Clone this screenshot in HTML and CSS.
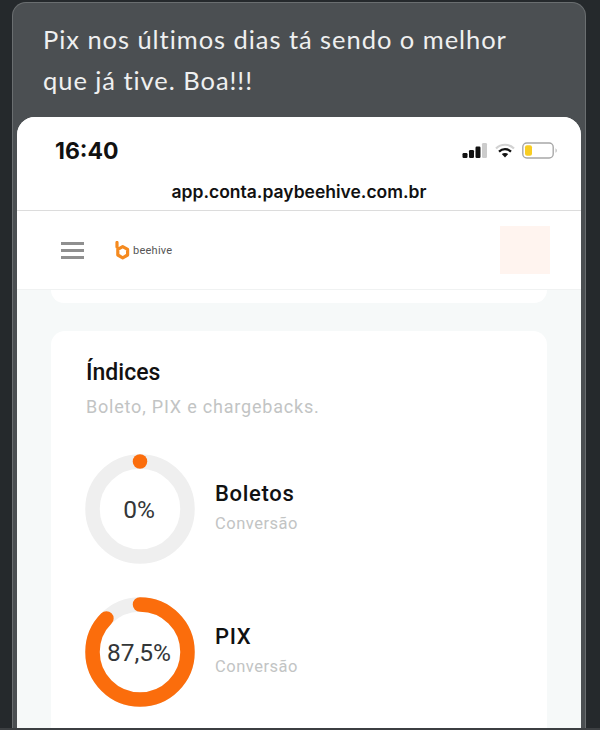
FILE: index.html
```html
<!DOCTYPE html>
<html lang="en">
<head>
    <meta charset="UTF-8">
    <meta name="viewport" content="width=device-width, initial-scale=1.0">
    <title>Mensagem Pix</title>
    <link rel="stylesheet" href="styles.css">
</head>
<body>
    <div class="bubble">
        <p class="message">Pix nos últimos dias tá sendo o melhor<br>que já tive. Boa!!!</p>

        <div class="phone">
            <div class="status-bar">
                <span class="clock">16:40</span>
                <div class="status-icons">
                    <svg class="signal" width="26" height="16" viewBox="0 0 26 16">
                        <rect x="0.5" y="10" width="5" height="5" rx="1.2" fill="#111"/>
                        <rect x="7" y="7" width="5" height="8" rx="1.2" fill="#111"/>
                        <rect x="13.5" y="3.5" width="5" height="11.5" rx="1.2" fill="#111"/>
                        <rect x="20" y="0" width="5" height="15" rx="1.2" fill="#ccc"/>
                    </svg>
                    <svg class="wifi" width="20" height="16" viewBox="0 0 20 16">
                        <path d="M1 5.5 C6 0.5 14 0.5 19 5.5" fill="none" stroke="#d2d2d2" stroke-width="2.2"/>
                        <path d="M4 8.6 C7.5 5.4 12.5 5.4 16 8.6" fill="none" stroke="#111" stroke-width="2.2"/>
                        <path d="M6.8 11 C8.6 9.5 11.4 9.5 13.2 11 L10 14.6 Z" fill="#111"/>
                    </svg>
                    <svg class="battery" width="36" height="18" viewBox="0 0 36 18">
                        <rect x="0.8" y="1" width="30.4" height="15" rx="4" fill="#fff" stroke="#a8a8a8" stroke-width="1.4"/>
                        <rect x="3" y="3.2" width="7" height="10.6" rx="2" fill="#f8cd22"/>
                        <path d="M33.6 6.2 C35 7 35 10 33.6 10.8 Z" fill="#a8a8a8"/>
                    </svg>
                </div>
            </div>
            <div class="url-bar">app.conta.paybeehive.com.br</div>

            <header class="app-header">
                <div class="menu-icon"><span></span><span></span><span></span></div>
                <div class="logo">
                    <svg width="15" height="19" viewBox="0 0 15 19">
                        <path d="M2 1.5 V6 M7.7 5.6 L12.6 8.4 V14 L7.7 16.8 L2.8 14 V8.4 Z" fill="none" stroke="#f58a1f" stroke-width="3.2" stroke-linecap="round" stroke-linejoin="round"/>
                        <circle cx="7.7" cy="11.2" r="1.8" fill="#fff"/>
                    </svg>
                    <span class="logo-name">beehive</span>
                </div>
                <div class="avatar"></div>
            </header>

            <main class="content">
                <div class="card-stub"></div>
                <section class="card">
                    <h2>Índices</h2>
                    <p class="card-sub">Boleto, PIX e chargebacks.</p>

                    <div class="stat">
                        <div class="ring">
                            <svg width="110" height="110" viewBox="0 0 110 110">
                                <circle class="ring-track" cx="55" cy="55" r="47.5"/>
                                <circle class="ring-value" cx="55" cy="55" r="47.5" pathLength="100" stroke-dasharray="0 100" transform="rotate(-90 55 55)"/>
                            </svg>
                            <span class="ring-label">0%</span>
                        </div>
                        <div class="stat-text">
                            <h3>Boletos</h3>
                            <p>Conversão</p>
                        </div>
                    </div>

                    <div class="stat">
                        <div class="ring">
                            <svg width="110" height="110" viewBox="0 0 110 110">
                                <circle class="ring-track" cx="55" cy="55" r="47.5"/>
                                <circle class="ring-value" cx="55" cy="55" r="47.5" pathLength="100" stroke-dasharray="87.5 100" transform="rotate(-90 55 55)"/>
                            </svg>
                            <span class="ring-label">87,5%</span>
                        </div>
                        <div class="stat-text">
                            <h3>PIX</h3>
                            <p>Conversão</p>
                        </div>
                    </div>
                </section>
            </main>
        </div>
    </div>
</body>
</html>
```

FILE: styles.css
```css
:root {
    --orange: #fb6d0c;
    --muted: #c2c4c4;
    --text-color: #333638;
}

* {
    box-sizing: border-box;
}

body {
    margin: 0;
    height: 730px;
    padding: 2px 14px 0 12px;
    overflow: hidden;
    background-color: #25292c;
    font-family: 'Roboto', 'Liberation Sans', sans-serif;
    color: #111;
    border-bottom: 2px solid #3c3f42;
}

.bubble {
    height: 726px;
    padding: 0 4px;
    display: flex;
    flex-direction: column;
    background-color: #4b4f52;
    border: 1px solid #6a6e70;
    border-bottom: none;
    border-radius: 14px 14px 0 0;
}

.message {
    flex-shrink: 0;
    margin: 0;
    height: 114px;
    padding: 16px 0 0 26px;
    font-family: 'Lato', sans-serif;
    font-size: 25.5px;
    line-height: 41px;
    letter-spacing: 0.95px;
    color: #eff0f0;
}

.phone {
    flex: 1;
    min-height: 0;
    overflow: hidden;
    background-color: #f6f9f9;
    border-radius: 18px 18px 0 0;
}

.status-bar {
    height: 60px;
    padding: 8px 23px 0 38px;
    display: flex;
    justify-content: space-between;
    align-items: center;
    background: white;
}

.clock {
    font-family: 'Inter', sans-serif;
    font-size: 23px;
    font-weight: 700;
}

.status-icons {
    display: flex;
    align-items: center;
    gap: 7px;
}

.url-bar {
    height: 34px;
    padding-bottom: 4px;
    display: flex;
    justify-content: center;
    align-items: center;
    background: white;
    border-bottom: 1px solid #dcdcdc;
    font-family: 'Inter', sans-serif;
    font-size: 17.5px;
    font-weight: 600;
}

.app-header {
    height: 79px;
    padding: 0 31px 0 44px;
    display: flex;
    align-items: center;
    background: white;
    border-bottom: 1px solid #f0f2f2;
}

.menu-icon {
    width: 23px;
    display: flex;
    flex-direction: column;
    gap: 4px;
}

.menu-icon span {
    height: 3px;
    background-color: #8f8f8f;
}

.logo {
    margin-left: 31px;
    display: flex;
    align-items: center;
    gap: 3px;
}

.logo-name {
    font-size: 11px;
    letter-spacing: 0.25px;
    color: #555;
}

.avatar {
    width: 50px;
    height: 48px;
    margin-left: auto;
    background-color: #fff4ef;
}

.content {
    padding: 0 34px;
}

.card-stub {
    height: 13px;
    background: white;
    border-radius: 0 0 14px 14px;
}

.card {
    height: 500px;
    margin-top: 28px;
    padding: 28px 35px;
    background: white;
    border-radius: 14px;
}

h2 {
    margin: 0;
    font-size: 23px;
    line-height: 28px;
    font-weight: 500;
}

.card-sub {
    margin: 9px 0 0;
    font-size: 18px;
    line-height: 22px;
    letter-spacing: 0.8px;
    color: var(--muted);
}

.stat {
    margin-top: 33px;
    display: flex;
    align-items: center;
    gap: 20px;
}

.card-sub + .stat {
    margin-top: 36px;
}

.ring {
    position: relative;
    width: 110px;
    height: 110px;
    margin-left: -1px;
}

.ring svg {
    display: block;
}

.ring-track,
.ring-value {
    fill: none;
    stroke-width: 14.5;
}

.ring-track {
    stroke: #efefef;
}

.ring-value {
    stroke: var(--orange);
    stroke-linecap: round;
}

.ring-label {
    position: absolute;
    inset: 0;
    padding-right: 2px;
    display: flex;
    justify-content: center;
    align-items: center;
    font-size: 24.5px;
    color: var(--text-color);
}

.stat-text {
    padding-bottom: 4px;
}

h3 {
    margin: 0;
    font-size: 22px;
    line-height: 28px;
    font-weight: 500;
    letter-spacing: 0.7px;
}

.stat-text p {
    margin: 6px 0 0;
    font-size: 16.5px;
    line-height: 20px;
    letter-spacing: 0.5px;
    color: var(--muted);
}
```
